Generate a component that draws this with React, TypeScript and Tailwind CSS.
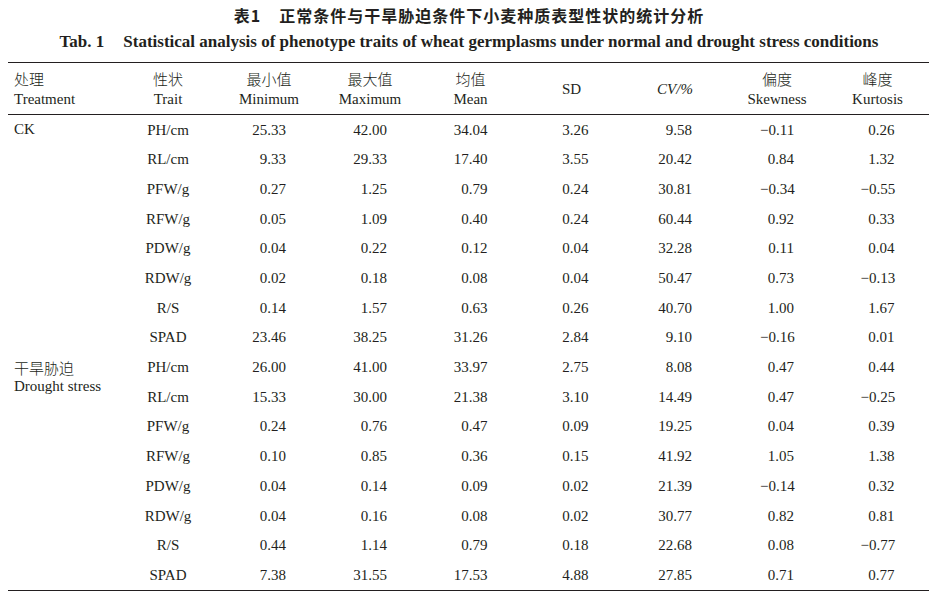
const serif = '"Liberation Serif", "Times New Roman", "Noto Sans CJK SC", serif';
const cjk = '"Noto Sans CJK SC", "Noto Sans", sans-serif';

type Row = [string, string, string, string, string, string, string, string];

const ck: Row[] = [
  ["PH/cm", "25.33", "42.00", "34.04", "3.26", "9.58", "−0.11", "0.26"],
  ["RL/cm", "9.33", "29.33", "17.40", "3.55", "20.42", "0.84", "1.32"],
  ["PFW/g", "0.27", "1.25", "0.79", "0.24", "30.81", "−0.34", "−0.55"],
  ["RFW/g", "0.05", "1.09", "0.40", "0.24", "60.44", "0.92", "0.33"],
  ["PDW/g", "0.04", "0.22", "0.12", "0.04", "32.28", "0.11", "0.04"],
  ["RDW/g", "0.02", "0.18", "0.08", "0.04", "50.47", "0.73", "−0.13"],
  ["R/S", "0.14", "1.57", "0.63", "0.26", "40.70", "1.00", "1.67"],
  ["SPAD", "23.46", "38.25", "31.26", "2.84", "9.10", "−0.16", "0.01"],
];

const drought: Row[] = [
  ["PH/cm", "26.00", "41.00", "33.97", "2.75", "8.08", "0.47", "0.44"],
  ["RL/cm", "15.33", "30.00", "21.38", "3.10", "14.49", "0.47", "−0.25"],
  ["PFW/g", "0.24", "0.76", "0.47", "0.09", "19.25", "0.04", "0.39"],
  ["RFW/g", "0.10", "0.85", "0.36", "0.15", "41.92", "1.05", "1.38"],
  ["PDW/g", "0.04", "0.14", "0.09", "0.02", "21.39", "−0.14", "0.32"],
  ["RDW/g", "0.04", "0.16", "0.08", "0.02", "30.77", "0.82", "0.81"],
  ["R/S", "0.44", "1.14", "0.79", "0.18", "22.68", "0.08", "−0.77"],
  ["SPAD", "7.38", "31.55", "17.53", "4.88", "27.85", "0.71", "0.77"],
];

const gridCols =
  "grid grid-cols-[110px_100px_102px_100px_101px_101px_106px_98px_103px]";

function Group({ zh, en, rows }: { zh: string; en?: string; rows: Row[] }) {
  return (
    <>
      <div className="row-span-8 pl-[6px] pt-[5px] leading-[19px]">
        <div style={{ fontFamily: en ? cjk : serif }} className={en ? "font-light" : ""}>
          {zh}
        </div>
        {en && <div>{en}</div>}
      </div>
      {rows.map((r) =>
        r.map((v, i) =>
          i === 0 ? (
            <div key={zh + r[0] + i} className="flex h-[29.7px] items-center justify-center">
              {v}
            </div>
          ) : (
            <div key={zh + r[0] + i} className="flex h-[29.7px] items-center justify-center">
              <span className="inline-block w-[34px] whitespace-nowrap text-right">
                {v}
              </span>
            </div>
          )
        )
      )}
    </>
  );
}

function Head({ zh, en }: { zh: string; en: string }) {
  return (
    <div className="flex flex-col items-center justify-center leading-[20px]">
      <div style={{ fontFamily: cjk }} className="font-light">
        {zh}
      </div>
      <div>{en}</div>
    </div>
  );
}

export default function App() {
  return (
    <div
      className="h-[597px] w-[938px] bg-white text-[15px] text-[#231f20]"
      style={{ fontFamily: serif }}
    >
      <div
        className="pt-[5px] text-center text-[16px] font-bold leading-[20px] tracking-[1px]"
        style={{ fontFamily: cjk }}
      >
        表1<span className="ml-[18px]">正常条件与干旱胁迫条件下小麦种质表型性状的统计分析</span>
      </div>
      <div className="mt-[7px] text-center text-[17px] font-bold leading-[20px]">
        Tab. 1<span className="ml-[19px]">Statistical analysis of phenotype traits of wheat germplasms under normal and drought stress conditions</span>
      </div>

      <div className="ml-[8px] mt-[10px] w-[921px] border-t-[1.5px] border-b border-[#231f20]">
        <div className={`${gridCols} h-[52px] border-b border-[#231f20] pt-[1px]`}>
          <div className="flex flex-col justify-center pl-[6px] leading-[20px]">
            <div style={{ fontFamily: cjk }} className="font-light">
              处理
            </div>
            <div>Treatment</div>
          </div>
          <Head zh="性状" en="Trait" />
          <Head zh="最小值" en="Minimum" />
          <Head zh="最大值" en="Maximum" />
          <Head zh="均值" en="Mean" />
          <div className="flex items-center justify-center">SD</div>
          <div className="flex items-center justify-center italic">CV/%</div>
          <Head zh="偏度" en="Skewness" />
          <Head zh="峰度" en="Kurtosis" />
        </div>
        <div className={gridCols}>
          <Group zh="CK" rows={ck} />
          <Group zh="干旱胁迫" en="Drought stress" rows={drought} />
        </div>
      </div>
    </div>
  );
}
